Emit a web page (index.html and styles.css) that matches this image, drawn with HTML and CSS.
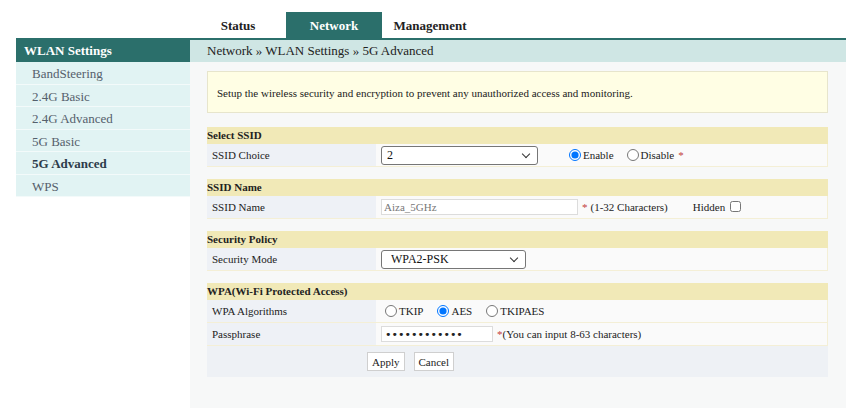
FILE: index.html
```html
<!DOCTYPE html>
<html>
<head>
<meta charset="utf-8">
<link rel="stylesheet" href="styles.css">
</head>
<body>
<div class="page">
  <div class="corner"></div>
  <nav class="tabs">
    <a class="tab">Status</a>
    <a class="tab active">Network</a>
    <a class="tab">Management</a>
  </nav>
  <aside class="side">
    <div class="side-head">WLAN Settings</div>
    <ul class="side-menu">
      <li>BandSteering</li>
      <li>2.4G Basic</li>
      <li>2.4G Advanced</li>
      <li>5G Basic</li>
      <li class="current">5G Advanced</li>
      <li>WPS</li>
    </ul>
  </aside>
  <main class="main">
    <div class="crumb">Network » WLAN Settings » 5G Advanced</div>
    <div class="panel">
      <div class="notice">Setup the wireless security and encryption to prevent any unauthorized access and monitoring.</div>

      <section class="sec">
        <div class="sec-head">Select SSID</div>
        <div class="row">
          <div class="lbl">SSID Choice</div>
          <div class="val">
            <span class="sel-wrap sel-ssid"><select class="sel"><option>2</option></select></span>
            <label class="opt opt-enable"><input type="radio" name="en" checked><span>Enable</span></label>
            <label class="opt opt-disable"><input type="radio" name="en"><span>Disable</span></label>
            <span class="req">*</span>
          </div>
        </div>
      </section>

      <section class="sec">
        <div class="sec-head">SSID Name</div>
        <div class="row">
          <div class="lbl">SSID Name</div>
          <div class="val">
            <input class="txt txt-ssid" type="text" value="Aiza_5GHz">
            <span class="req req-gap">*</span><span class="hint">(1-32 Characters)</span>
            <span class="hidden-lbl">Hidden</span><input class="chk" type="checkbox">
          </div>
        </div>
      </section>

      <section class="sec">
        <div class="sec-head">Security Policy</div>
        <div class="row">
          <div class="lbl">Security Mode</div>
          <div class="val">
            <span class="sel-wrap sel-mode"><select class="sel"><option>WPA2-PSK</option></select></span>
          </div>
        </div>
      </section>

      <section class="sec">
        <div class="sec-head">WPA(Wi-Fi Protected Access)</div>
        <div class="row">
          <div class="lbl">WPA Algorithms</div>
          <div class="val">
            <label class="opt opt-alg"><input type="radio" name="alg"><span>TKIP</span></label>
            <label class="opt opt-alg"><input type="radio" name="alg" checked><span>AES</span></label>
            <label class="opt opt-alg"><input type="radio" name="alg"><span>TKIPAES</span></label>
          </div>
        </div>
        <div class="row">
          <div class="lbl">Passphrase</div>
          <div class="val">
            <input class="txt txt-pass" type="password" value="aaaaaaaaaaaa">
            <span class="req req-gap2">*</span><span class="hint hint-tight">(You can input 8-63 characters)</span>
          </div>
        </div>
        <div class="btn-row">
          <button class="btn">Apply</button>
          <button class="btn">Cancel</button>
        </div>
      </section>
    </div>
  </main>
</div>
</body>
</html>
```

FILE: styles.css
```css
html, body {
  margin: 0;
  padding: 0;
  background: #ffffff;
}
body {
  font-family: "Liberation Serif", "Times New Roman", serif;
  color: #222;
  height: 408px;
  overflow: hidden;
}
.page {
  display: grid;
  grid-template-columns: 174px 656px;
  grid-template-rows: 38px auto;
  margin-left: 16px;
}
.tabs {
  display: flex;
  padding-top: 12px;
  height: 26px;
}
.tab {
  width: 96px;
  height: 26px;
  line-height: 27px;
  text-align: center;
  font-weight: bold;
  font-size: 13px;
  color: #222;
}
.tab.active {
  background: #2b6f6b;
  color: #fff;
}
.side-head {
  background: #2b6f6b;
  color: #fff;
  font-weight: bold;
  font-size: 13px;
  height: 24px;
  line-height: 25px;
  padding-left: 8px;
}
.side-menu {
  list-style: none;
  margin: 0;
  padding: 0;
}
.side-menu li {
  background: #e1f3f3;
  font-size: 13px;
  color: #55606c;
  padding-left: 16px;
  height: 21.5px;
  line-height: 23px;
  border-bottom: 1px solid #f3fafa;
}
.side-menu li.current {
  font-weight: bold;
  color: #2c3b4a;
}
.crumb {
  border-top: 2px solid #2b6f6b;
  background: #cfe6e4;
  height: 22px;
  line-height: 22px;
  font-size: 13px;
  padding-left: 17px;
  color: #222;
}
.panel {
  background: #f7f8f8;
  padding: 9px 18px 0 17px;
  height: 346px;
  box-sizing: border-box;
}
.notice {
  background: #fffee4;
  border: 1px solid #e7e5cc;
  height: 40px;
  line-height: 43px;
  font-size: 11px;
  padding-left: 9px;
  color: #222;
}
.sec {
  margin-top: 14px;
}
.sec + .sec {
  margin-top: 12px;
}
.sec-head {
  background: #f1e9b7;
  height: 17px;
  line-height: 17px;
  font-size: 11px;
  font-weight: bold;
  color: #222;
}
.row {
  display: grid;
  grid-template-columns: 169px 1fr;
  height: 22px;
  border-bottom: 1px solid #f4efd6;
}
.lbl {
  background: #eef1f6;
  font-size: 11px;
  line-height: 22px;
  padding-left: 5px;
  color: #222;
}
.val {
  background: #fafafa;
  display: flex;
  align-items: center;
  padding-left: 5px;
  font-family: "Liberation Serif", "Times New Roman", serif;
  font-size: 11px;
  color: #222;
  border-right: 1px solid #f4efd6;
}
.val span, .val label {
  font-family: "Liberation Serif", "Times New Roman", serif;
  font-size: 11px;
}
.sel-wrap {
  position: relative;
  display: block;
  height: 19px;
}
.sel-wrap::after {
  content: "";
  position: absolute;
  right: 9px;
  top: 5px;
  width: 5px;
  height: 5px;
  border-right: 1.3px solid #333;
  border-bottom: 1.3px solid #333;
  transform: rotate(45deg);
  pointer-events: none;
}
.sel {
  -webkit-appearance: none;
  appearance: none;
  font-family: "Liberation Serif", "Times New Roman", serif;
  font-size: 12px;
  width: 100%;
  height: 19px;
  box-sizing: border-box;
  background: #fff;
  border: 1px solid #767676;
  border-radius: 3px;
  color: #111;
  padding: 0 0 0 5px;
  margin: 0;
}
.sel-ssid {
  width: 157px;
}
.sel-mode {
  width: 145px;
}
.sel-mode .sel {
  padding-left: 9px;
}
.opt {
  display: flex;
  align-items: center;
}
.opt input {
  width: 12px;
  height: 12px;
  margin: 0 2px 0 0;
}
.opt-enable {
  margin-left: 31px;
}
.opt-disable {
  margin-left: 13px;
}
.req {
  color: #c23a3a;
  margin-left: 4px;
}
.req-gap {
  margin-left: 4px;
}
.req-gap2 {
  margin-left: 4px;
}
.hint {
  margin-left: 3px;
}
.hint-tight {
  margin-left: 0;
}
.txt {
  font-family: "Liberation Serif", "Times New Roman", serif;
  font-size: 11px;
  height: 16px;
  box-sizing: border-box;
  border: 1px solid #dcdcdc;
  background: #fff;
  padding: 0 2px;
  margin: 0;
}
.txt-ssid {
  width: 197px;
  color: #777;
}
.txt-pass {
  width: 112px;
  color: #222;
  font-family: "DejaVu Sans", sans-serif;
  font-size: 11px;
  letter-spacing: 0;
  padding-left: 3px;
}
.hidden-lbl {
  margin-left: 25px;
}
.chk {
  width: 11px;
  height: 11px;
  margin: 0 0 2px 5px;
}
.opt-alg {
  margin-left: 14px;
}
.opt-alg:first-child {
  margin-left: 4px;
}
.btn-row {
  background: #eef1f5;
  height: 31px;
  display: flex;
  align-items: center;
  padding-left: 160px;
}
.btn {
  font-family: "Liberation Serif", "Times New Roman", serif;
  font-size: 11px;
  height: 19px;
  background: #fff;
  border: 1px solid #cfcfcf;
  border-radius: 0;
  padding: 0 4px;
  margin: 0 9px 0 0;
  color: #222;
}
```
